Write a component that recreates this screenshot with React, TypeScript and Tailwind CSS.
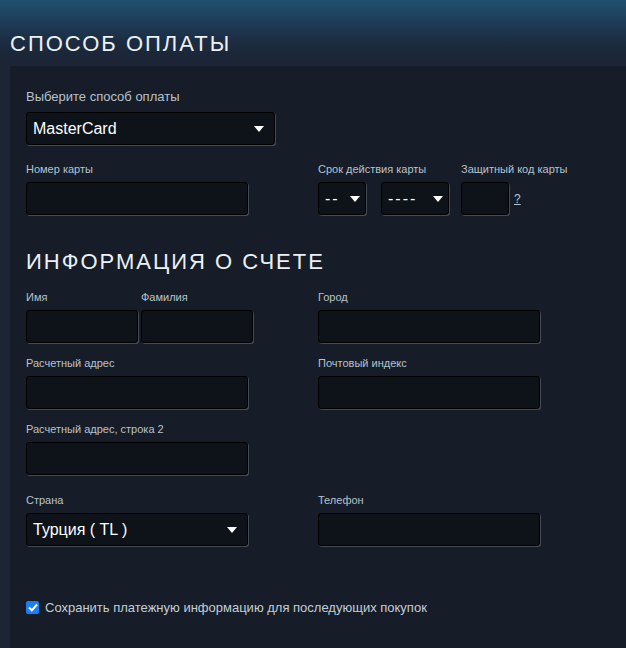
import React from 'react';

const Arrow = () => (
  <svg width="10" height="6" viewBox="0 0 10 6" className="shrink-0">
    <path d="M0 0 L10 0 L5 6 Z" fill="#ffffff" />
  </svg>
);

const inputBox =
  'h-[33px] rounded-[3px] border border-black bg-[#0e131a] shadow-[1px_1px_0_rgba(255,255,255,0.2)]';

const Label = ({ children }: { children: React.ReactNode }) => (
  <div className="h-4 text-[11px] leading-4 text-[#b6c2cd]">{children}</div>
);

const Field = ({ label, width }: { label: string; width: string }) => (
  <div>
    <Label>{label}</Label>
    <div className={`mt-[5px] ${inputBox} ${width}`} />
  </div>
);

const Select = ({ value, width, pad }: { value: string; width: string; pad: string }) => (
  <div className={`flex items-center justify-between ${inputBox} ${width} ${pad}`}>
    <span className="text-[16px] text-white">{value}</span>
    <Arrow />
  </div>
);

const App = () => {
  return (
    <div
      className="h-[648px] w-[626px] overflow-hidden bg-[linear-gradient(to_bottom,#21506f_0px,#1e3c58_22px,#1c2c40_42px,#1b2535_60px,#1b2535_100%)]"
      style={{ fontFamily: '"Liberation Sans", Arial, sans-serif' }}
    >
      <div className="h-[66px] pl-[10px] pt-[31px]">
        <h1 className="text-[22px] leading-[26px] tracking-[2px] text-[#ebf1f5]">СПОСОБ ОПЛАТЫ</h1>
      </div>

      <div className="ml-[10px] h-[582px] bg-[#171d28] pl-4 pt-[23px]">
        <div className="text-[13px] leading-4 text-[#b6c2cd]">Выберите способ оплаты</div>
        <div className="mt-[7px]">
          <Select value="MasterCard" width="w-[249px]" pad="pl-[6px] pr-[10px]" />
        </div>

        <div className="mt-4 flex">
          <div className="w-[292px]">
            <Field label="Номер карты" width="w-[222px]" />
          </div>
          <div className="w-[143px]">
            <Label>Срок действия карты</Label>
            <div className="mt-[5px] flex gap-[15px]">
              <Select value="--" width="w-[48px]" pad="pl-[6px] pr-[5px] tracking-[2px]" />
              <Select value="----" width="w-[68px]" pad="pl-[6px] pr-[5px] tracking-[2px]" />
            </div>
          </div>
          <div>
            <Label>Защитный код карты</Label>
            <div className="mt-[5px] flex items-center gap-[5px]">
              <div className={`${inputBox} w-[48px]`} />
              <span className="text-[12px] text-[#b6c2cd] underline">?</span>
            </div>
          </div>
        </div>

        <h2 className="mt-[34px] text-[22px] leading-[26px] tracking-[2px] text-[#ebf1f5]">
          ИНФОРМАЦИЯ О СЧЕТЕ
        </h2>

        <div className="mt-[14px] grid grid-cols-[292px_1fr] gap-y-3">
          <div className="flex gap-[3px]">
            <Field label="Имя" width="w-[112px]" />
            <Field label="Фамилия" width="w-[112px]" />
          </div>
          <Field label="Город" width="w-[222px]" />

          <Field label="Расчетный адрес" width="w-[222px]" />
          <Field label="Почтовый индекс" width="w-[222px]" />

          <Field label="Расчетный адрес, строка 2" width="w-[222px]" />
          <div />

          <div className="mt-[5px]">
            <Label>Страна</Label>
            <div className="mt-[5px]">
              <Select value="Турция ( TL )" width="w-[222px]" pad="pl-[6px] pr-[10px]" />
            </div>
          </div>
          <div className="mt-[5px]">
            <Field label="Телефон" width="w-[222px]" />
          </div>
        </div>

        <div className="mt-[52px] flex items-center gap-[6px]">
          <div className="flex h-[13px] w-[13px] items-center justify-center rounded-[2px] bg-[#1a7ef5]">
            <svg width="10" height="9" viewBox="0 0 10 9">
              <path d="M1 4.5 L3.8 7.3 L9 1.5" fill="none" stroke="#ffffff" strokeWidth="2" />
            </svg>
          </div>
          <span className="text-[13px] text-[#c2ced9]">
            Сохранить платежную информацию для последующих покупок
          </span>
        </div>
      </div>
    </div>
  );
};

export default App;
